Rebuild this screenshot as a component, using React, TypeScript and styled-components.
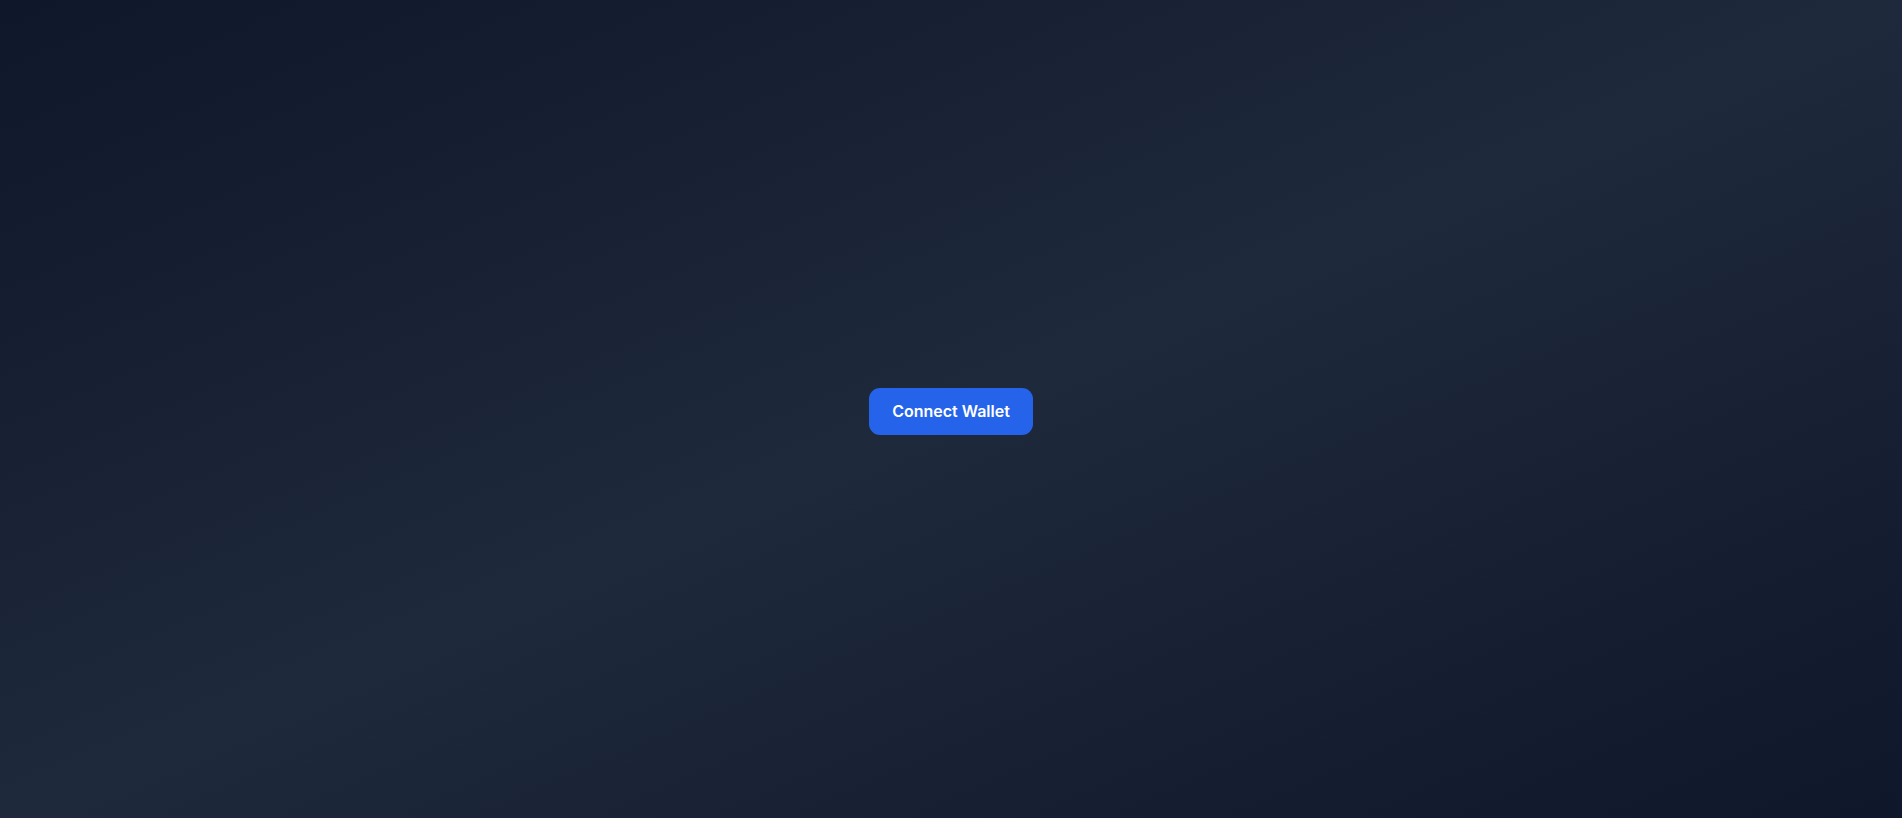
import React from "react";
import styled, { createGlobalStyle } from "styled-components";

const GlobalStyle = createGlobalStyle`
  html, body {
    margin: 0;
    padding: 0;
    height: 100%;
  }
  #root {
    height: 100%;
  }
  body {
    font-family: Inter, "Noto Sans", "Liberation Sans", sans-serif;
  }
`;

const Page = styled.main`
  box-sizing: border-box;
  min-height: 100vh;
  padding-top: 4px;
  display: flex;
  align-items: center;
  justify-content: center;
  background: linear-gradient(to bottom right, #0f172a 0%, #1e293b 50%, #0f172a 100%);
`;

const ConnectButton = styled.button`
  font-family: Inter, "Noto Sans", "Liberation Sans", sans-serif;
  font-size: 16px;
  font-weight: 600;
  line-height: 23px;
  color: #ffffff;
  background: #2563eb;
  border: none;
  border-radius: 11px;
  padding: 12px 23px;
  cursor: pointer;
`;

export default function App() {
  return (
    <>
      <GlobalStyle />
      <Page>
        <ConnectButton>Connect Wallet</ConnectButton>
      </Page>
    </>
  );
}
